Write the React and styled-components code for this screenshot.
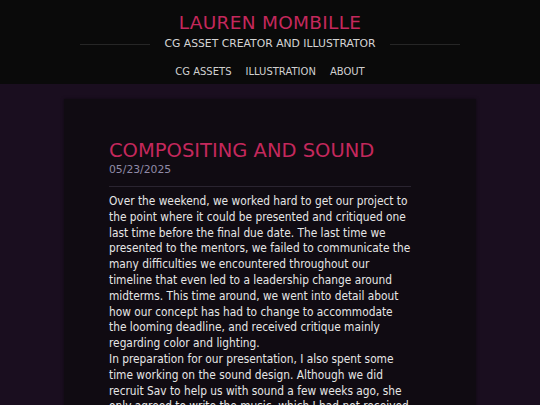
import React from "react";
import styled, { createGlobalStyle } from "styled-components";

const Global = createGlobalStyle`
  html, body { margin: 0; padding: 0; background: #1a0e1f; }
  body { font-family: "DejaVu Sans", Verdana, sans-serif; overflow: hidden; }
`;

const Page = styled.div`
  min-height: 405px;
  background: #1a0e1f;
`;

const Header = styled.header`
  background: #0a0a0a;
  height: 84px;
  box-sizing: border-box;
  padding-top: 12px;
  display: flex;
  flex-direction: column;
  align-items: center;
`;

const SiteTitle = styled.h1`
  margin: 0;
  font-size: 18.5px;
  font-weight: normal;
  line-height: 22px;
  color: #c4285c;
  letter-spacing: 0.3px;
`;

const SubRow = styled.div`
  display: flex;
  align-items: center;
  width: 380px;
  gap: 14px;
  margin-top: 2px;
`;

const Rule = styled.div`
  flex: 1;
  height: 1px;
  background: #262626;
`;

const Subtitle = styled.div`
  font-size: 10.8px;
  line-height: 16px;
  color: #d4d4d4;
  white-space: nowrap;
`;

const Nav = styled.nav`
  display: flex;
  gap: 14px;
  margin-top: 13px;
`;

const NavLink = styled.a`
  font-size: 10px;
  color: #d0d0d0;
  text-decoration: none;
  line-height: 14px;
`;

const Main = styled.main`
  display: flex;
  justify-content: center;
  padding-top: 15px;
`;

const Card = styled.article`
  width: 412px;
  box-sizing: border-box;
  background: #100b12;
  padding: 40px 65px 40px 45px;
  box-shadow: 0 0 3px rgba(0, 0, 0, 0.5);
  min-height: 320px;
`;

const PostTitle = styled.h2`
  margin: 0;
  font-size: 19.5px;
  font-weight: normal;
  line-height: 24px;
  color: #c4285c;
`;

const PostDate = styled.div`
  font-size: 10.8px;
  line-height: 14px;
  color: #918ba8;
`;

const Divider = styled.hr`
  border: none;
  height: 1px;
  background: #2a2430;
  margin: 9px 0 7px;
`;

const Body = styled.div`
  font-family: "DejaVu Sans Condensed", "DejaVu Sans", sans-serif;
  font-stretch: condensed;
  font-size: 11.8px;
  line-height: 15.8px;
  color: #e6e6e6;
`;

const Para = styled.p`
  margin: 0;
`;

export default function App() {
  return (
    <Page>
      <Global />
      <Header>
        <SiteTitle>LAUREN MOMBILLE</SiteTitle>
        <SubRow>
          <Rule />
          <Subtitle>CG ASSET CREATOR AND ILLUSTRATOR</Subtitle>
          <Rule />
        </SubRow>
        <Nav>
          <NavLink href="#">CG ASSETS</NavLink>
          <NavLink href="#">ILLUSTRATION</NavLink>
          <NavLink href="#">ABOUT</NavLink>
        </Nav>
      </Header>
      <Main>
        <Card>
          <PostTitle>COMPOSITING AND SOUND</PostTitle>
          <PostDate>05/23/2025</PostDate>
          <Divider />
          <Body>
            <Para>
              Over the weekend, we worked hard to get our project to the point where it could be
              presented and critiqued one last time before the final due date. The last time we
              presented to the mentors, we failed to communicate the many difficulties we
              encountered throughout our timeline that even led to a leadership change around
              midterms. This time around, we went into detail about how our concept has had to
              change to accommodate the looming deadline, and received critique mainly regarding
              color and lighting.
            </Para>
            <Para>
              In preparation for our presentation, I also spent some time working on the sound
              design. Although we did recruit Sav to help us with sound a few weeks ago, she only
              agreed to write the music, which I had not received yet.
            </Para>
          </Body>
        </Card>
      </Main>
    </Page>
  );
}
